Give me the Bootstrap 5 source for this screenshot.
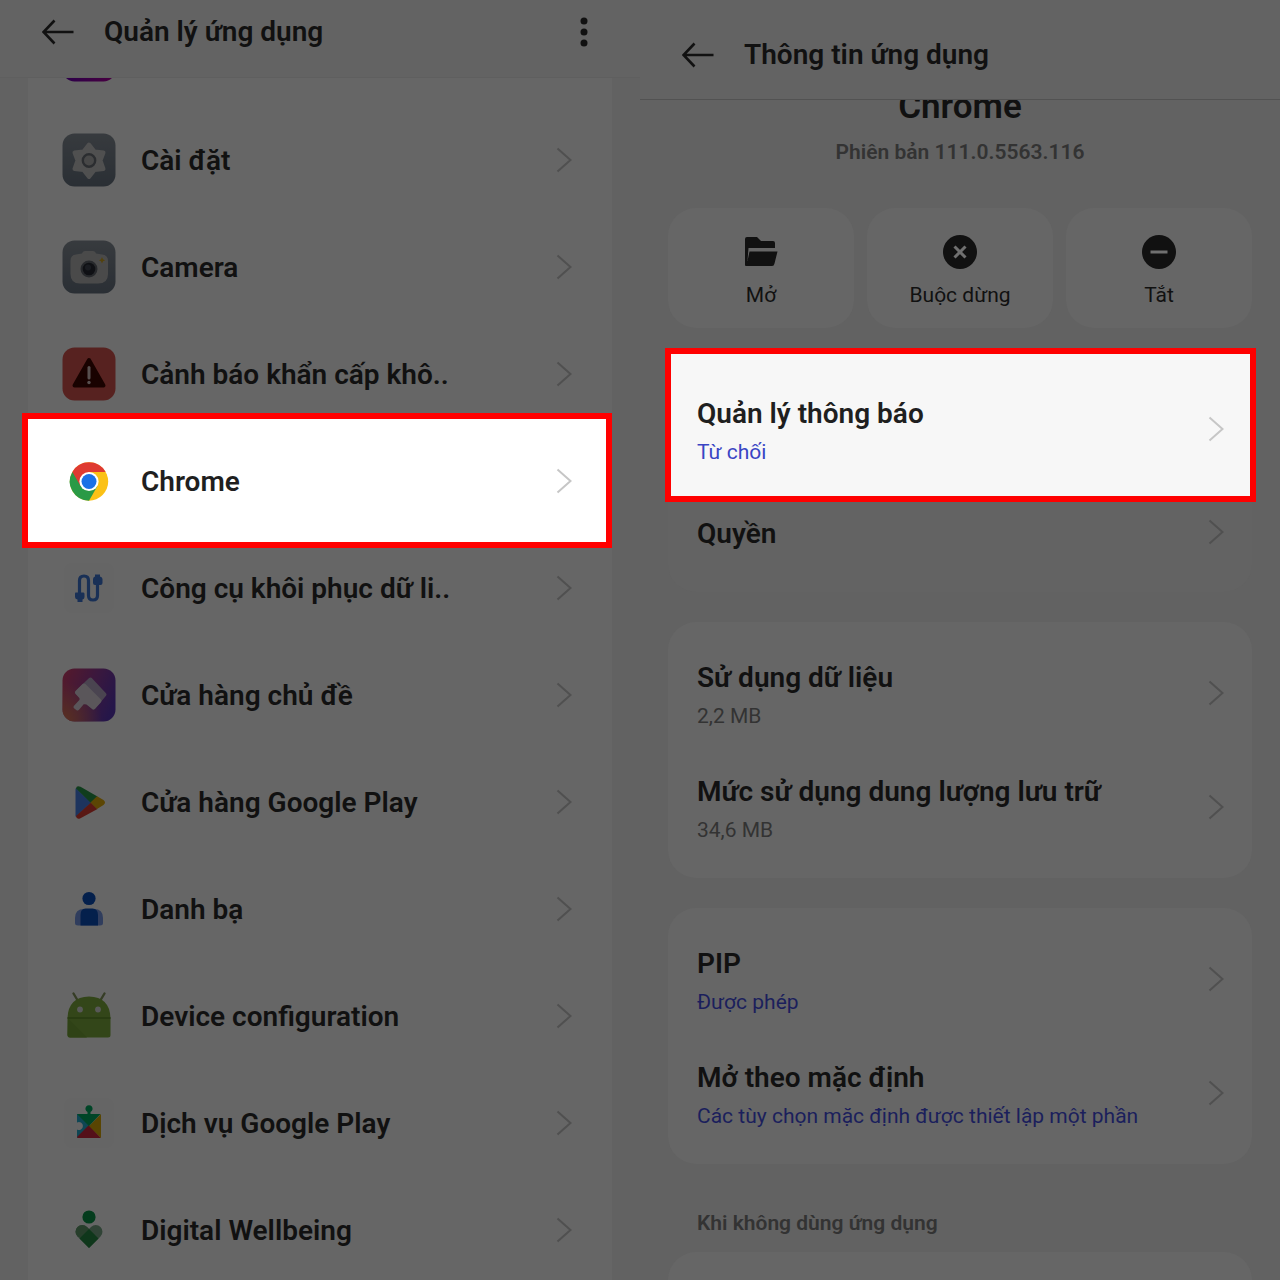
<!DOCTYPE html>
<html lang="vi">
<head>
<meta charset="utf-8">
<meta name="viewport" content="width=device-width, initial-scale=1">
<title>Quản lý ứng dụng</title>
<link rel="stylesheet" href="https://cdn.jsdelivr.net/npm/bootstrap@5.3.0/dist/css/bootstrap.min.css">
<style>
  body { font-family: Roboto, "Noto Sans", sans-serif; background: #626262; color: #111; }
  .screen { background: #626262; }
  .topbar { background: #636363; padding: 0 48px 0 42px; gap: 30px; z-index: 2; }
  .topbar-apps { height: 78px; padding-bottom: 14px; border-bottom: 1px solid #5f5f5f; }
  .topbar-info { height: 100px; padding-top: 10px; border-bottom: 1px solid #525252; }
  .plain-btn { background: none; border: 0; padding: 0; color: inherit; line-height: 0; }
  .title { font-size: 28px; font-weight: 600; line-height: 36px; margin: 0; }
  .sheet { background: #666; margin: 0 28px; }
  .cut-row { height: 28px; padding-left: 34px; overflow: hidden; }
  .cut-row svg { margin-top: -50px; }
  .app-row { height: 107px; padding: 0 40px 0 34px; gap: 25px; color: #111; text-decoration: none; position: relative; }
  .app-row > * { position: relative; }
  .app-row .title { padding-top: 2px; }
  .app-icon { width: 54px; height: 54px; flex: none; filter: brightness(.4); }
  .chev { width: 16px; height: 26px; flex: none; fill: none; stroke: #505050; stroke-width: 2; margin-left: auto; }
  .picked { color: #1f1f1f; z-index: 1; }
  .picked::before { content: ""; position: absolute; border: 6px solid #f00; }
  .app-row.picked { color: #1f1f1f; }
  .app-row.picked::before { inset: -14px 0 -14px -6px; background: #fff; }
  .picked .app-icon { filter: none; }
  .picked .chev { stroke: #c6c6c6; }
  .info-body { padding: 0 28px; gap: 30px; }
  .app-name { font-size: 35px; font-weight: 600; line-height: 42px; margin: -14px 0 0; }
  .version { font-size: 21px; font-weight: 600; line-height: 28px; color: #333; margin: 10px 0 0; }
  .tiles { gap: 13px; margin-top: 12px; }
  .tile { background: #666; border: 0; border-radius: 28px; height: 120px; flex: 1 1 0; color: #111; font-size: 21px; line-height: 28px; padding-top: 8px; gap: 11px; }
  .tile svg { width: 36px; height: 36px; }
  .panel { background: #666; border-radius: 28px; padding: 14px 0; }
  .panel-faint { background: #636363; }
  .panel-last { border-radius: 28px 28px 0 0; margin-top: -15px; }
  .set-row { height: 114px; padding: 0 28px 0 29px; color: #111; text-decoration: none; position: relative; }
  .set-row > * { position: relative; }
  .set-row > span { padding-top: 4px; }
  .set-row-single { height: 92px; }
  .set-row.picked { color: #1f1f1f; }
  .set-row.picked::before { inset: -24px -4px -16px -3px; background: #f7f7f7; }
  .note { font-size: 21px; line-height: 28px; color: #333; margin-top: 6px; }
  .note-link { color: #1b1f5c; }
  .picked .note-link { color: #3a45c4; }
  .group-label { font-size: 21px; font-weight: 600; line-height: 28px; color: #333; margin: 15px 0 0 29px; }
</style>
<script src="https://cdn.jsdelivr.net/npm/bootstrap@5.3.0/dist/js/bootstrap.bundle.min.js"></script>
</head>
<body>
<svg width="0" height="0" class="position-absolute" aria-hidden="true">
  <defs>
    <linearGradient id="slate" x1="0" y1="0" x2="0" y2="1"><stop offset="0" stop-color="#8a929b"/><stop offset="1" stop-color="#697583"/></linearGradient>
    <linearGradient id="violet"><stop offset="0" stop-color="#6a00b8"/><stop offset="1" stop-color="#b800a0"/></linearGradient>
    <linearGradient id="theme" x1="0" y1=".2" x2="1" y2=".6"><stop offset="0" stop-color="#d04070"/><stop offset=".5" stop-color="#963c98"/><stop offset="1" stop-color="#5c38b8"/></linearGradient>
    <radialGradient id="glow" cx="0" cy="1" r=".75"><stop offset="0" stop-color="#e07c50"/><stop offset="1" stop-color="#e07c50" stop-opacity="0"/></radialGradient>
    <symbol id="chevron" viewBox="0 0 16 26"><path d="M1.500 1.500L14.500 13L1.500 24.500"/></symbol>
    <symbol id="back" viewBox="0 0 32 26"><path d="M12.500 1.500L1.500 13L12.500 24.500M1.500 13H31.500" fill="none" stroke="#111" stroke-width="2.600"/></symbol>
  </defs>
</svg>
<main class="row g-0 vh-100 overflow-hidden">
  <section class="screen col-6">
    <header class="topbar topbar-apps d-flex align-items-center position-relative">
      <button class="plain-btn" type="button" aria-label="Quay lại"><svg width="32" height="26"><use href="#back"/></svg></button>
      <h1 class="title">Quản lý ứng dụng</h1>
      <button class="plain-btn ms-auto" type="button" aria-label="Thêm"><svg width="16" height="30" fill="#111"><circle cx="8" cy="4" r="3.500"/><circle cx="8" cy="15" r="3.500"/><circle cx="8" cy="26" r="3.500"/></svg></button>
    </header>
    <nav class="sheet" aria-label="Ứng dụng">
      <div class="cut-row"><svg class="app-icon d-block" viewBox="0 0 54 54"><rect x=".5" y=".5" width="53" height="53" rx="12" fill="url(#violet)"/></svg></div>
      <a href="#" class="app-row d-flex align-items-center">
        <svg class="app-icon" viewBox="0 0 54 54"><rect x=".5" y=".5" width="53" height="53" rx="12" fill="url(#slate)"/><path d="M27 11.500L32.500 18.500L41.500 19.500L38.500 27.500L41.500 36L32.500 37L27 44L21.500 37L12.500 36L15.500 27.500L12.500 19.500L21.500 18.500Z" fill="#c8c8c8" stroke="#c8c8c8" stroke-width="4" stroke-linejoin="round"/><circle cx="27" cy="27.500" r="6.200" fill="#b4b4b4" stroke="#6c7178" stroke-width="2.400"/></svg>
        <span class="title">Cài đặt</span><svg class="chev"><use href="#chevron"/></svg></a>
      <a href="#" class="app-row d-flex align-items-center">
        <svg class="app-icon" viewBox="0 0 54 54"><rect x=".5" y=".5" width="53" height="53" rx="12" fill="url(#slate)"/><path d="M20 13.500Q20.500 11 23 11H31Q33.500 11 34 13.500L40 14.500Q46 15 46 21V34Q46 43.500 36 43.500H18Q8.500 43.500 8.500 34V21Q8.500 15 14 14.500Z" fill="#bababa"/><circle cx="27" cy="29" r="8.500" fill="#62666d"/><circle cx="27" cy="29" r="6.300" fill="#252932"/><circle cx="26" cy="27.500" r="3" fill="#404652"/><path d="M40 17l1 2.200 2.200 1-2.200 1-1 2.200-1-2.200-2.200-1 2.200-1z" fill="#d0a520"/></svg>
        <span class="title">Camera</span><svg class="chev"><use href="#chevron"/></svg></a>
      <a href="#" class="app-row d-flex align-items-center">
        <svg class="app-icon" viewBox="0 0 54 54"><rect x=".5" y=".5" width="53" height="53" rx="12" fill="#d95650"/><path d="M27 13L41.500 38.500H12.500Z" fill="#3e0500" stroke="#3e0500" stroke-width="4" stroke-linejoin="round"/><path d="M27 20.500V31" stroke="#ddc8c5" stroke-width="3" stroke-linecap="round"/><circle cx="27" cy="35.500" r="1.700" fill="#ddc8c5"/></svg>
        <span class="title">Cảnh báo khẩn cấp khô..</span><svg class="chev"><use href="#chevron"/></svg></a>
      <a href="#" class="app-row picked d-flex align-items-center">
        <svg class="app-icon" viewBox="0 0 54 54"><circle cx="27" cy="27.500" r="19.200" fill="#fbc116"/><path d="M27 27.500L10.370 17.900A19.200 19.200 0 0 0 27 46.700L35.310 32.300Z" fill="#2a9a46"/><path d="M10.370 17.900A19.200 19.200 0 0 1 43.630 17.900H27L18.690 32.300Z" fill="#df3a31"/><circle cx="27" cy="27.500" r="9.600" fill="#fff"/><circle cx="27" cy="27.500" r="7.500" fill="#1b70e6"/></svg>
        <span class="title">Chrome</span><svg class="chev"><use href="#chevron"/></svg></a>
      <a href="#" class="app-row d-flex align-items-center">
        <svg class="app-icon" viewBox="0 0 54 54"><rect x="2" y="2" width="50" height="50" rx="8" fill="#fcfcfc"/><path d="M17.500 34V19.500Q17.500 15 22 15Q26.500 15 26.500 19.500V34.500Q26.500 39 31 39Q35.500 39 35.500 34.500V22" fill="none" stroke="#3f78d8" stroke-width="3.200"/><path d="M13.500 31.500H21.500Q22.500 31.500 22.500 33V36Q22.500 38 20.500 38.500V41H15.500V38.500Q13 38 13 36V33Q13 31.500 13.500 31.500Z" fill="#3f78d8"/><path d="M33 13.500H38V15.500Q40.500 16 40.500 18V22Q40.500 24 38.500 24H33Q31 24 31 22V18Q31 16 33 15.500Z" fill="#3f78d8"/></svg>
        <span class="title">Công cụ khôi phục dữ li..</span><svg class="chev"><use href="#chevron"/></svg></a>
      <a href="#" class="app-row d-flex align-items-center">
        <svg class="app-icon" viewBox="0 0 54 54"><rect x=".5" y=".5" width="53" height="53" rx="12" fill="url(#theme)"/><rect x=".5" y=".5" width="53" height="53" rx="12" fill="url(#glow)"/><path d="M28.500 11.500L42.500 26.500L31.500 39.500L15 24.500Z" fill="#b9aac8" stroke="#b9aac8" stroke-width="4" stroke-linejoin="round"/><path d="M22 17.500L37.500 33L31.500 39.500L25 34.500L21 34L15.500 40.500L13.500 39L19.500 32.500V29.500L15 24.500Z" fill="#e0d8e0" stroke="#e0d8e0" stroke-width="4" stroke-linejoin="round"/></svg>
        <span class="title">Cửa hàng chủ đề</span><svg class="chev"><use href="#chevron"/></svg></a>
      <a href="#" class="app-row d-flex align-items-center">
        <svg class="app-icon" viewBox="0 0 54 54"><path d="M14 13.500V41.500L28.500 27.500Z" fill="#4883ea" stroke="#4883ea" stroke-width="1"/><path d="M14 13.500Q14.500 10 18.500 11.800L35.500 21.500L29 28L14 13.500Z" fill="#299948"/><path d="M14 41Q14.500 45 18.500 43.200L35.500 34L29 27.500Z" fill="#df3d33"/><path d="M35 21.300L41.500 25Q44.500 27.500 41.500 30L35 34L28.500 27.500Z" fill="#e5af0b"/></svg>
        <span class="title">Cửa hàng Google Play</span><svg class="chev"><use href="#chevron"/></svg></a>
      <a href="#" class="app-row d-flex align-items-center">
        <svg class="app-icon" viewBox="0 0 54 54"><path d="M22 27H32Q41 27 41 36V41Q41 43.500 38 43.500H16Q13 43.500 13 41V36Q13 27 22 27Z" fill="#7799e8"/><path d="M23.500 26.500H30.500Q36 26.500 36 33V43.500H18.500V33Q18.500 26.500 23.500 26.500Z" fill="#0b50bd"/><circle cx="27" cy="16.500" r="6.600" fill="#0b50bd"/></svg>
        <span class="title">Danh bạ</span><svg class="chev"><use href="#chevron"/></svg></a>
      <a href="#" class="app-row d-flex align-items-center">
        <svg class="app-icon" viewBox="0 0 54 54"><path d="M11.500 4.500L16 12M42.500 4.500L38 12" stroke="#86985e" stroke-width="2.400" stroke-linecap="round"/><path d="M5.500 29.500Q6 8 27 7.500Q48 8 48.500 29.500V46Q48.500 48.500 46 48.500H8Q5.500 48.500 5.500 46Z" fill="#7fae3e"/><path d="M5.500 29H48.500" stroke="#5f8e2a" stroke-width="1.500"/><path d="M6 29.500L25 48.500H8Q5.500 48.500 5.500 46Z" fill="#75a437"/><circle cx="18" cy="20.500" r="2.900" fill="#ddd"/><circle cx="36" cy="20.500" r="2.900" fill="#ddd"/></svg>
        <span class="title">Device configuration</span><svg class="chev"><use href="#chevron"/></svg></a>
      <a href="#" class="app-row d-flex align-items-center">
        <svg class="app-icon" viewBox="0 0 54 54"><rect x="2" y="2" width="50" height="50" rx="8" fill="#fcfcfc"/><path d="M15 18H27V30L15 42V33.500A4 4 0 1 0 15 26.500Z" fill="#22aed2"/><path d="M15 41L27 29L39 42H16Q15 42 15 41Z" fill="#d3283f"/><path d="M39 18V42L27 30Z" fill="#dfac05"/><path d="M15 18H25.500V16A3.600 3.600 0 1 1 28.500 16V18H38.500L27 30Z" fill="#00ad62"/></svg>
        <span class="title">Dịch vụ Google Play</span><svg class="chev"><use href="#chevron"/></svg></a>
      <a href="#" class="app-row d-flex align-items-center">
        <svg class="app-icon" viewBox="0 0 54 54"><path d="M27 45L15.500 33.500A6.700 6.700 0 0 1 25 24L27 26L29 24A6.700 6.700 0 0 1 38.500 33.500Z" fill="#79a787"/><path d="M15.500 33.500A6.700 6.700 0 0 1 25 24L33 32L27 38.500Z" fill="#619c6c"/><path d="M27 26L36.500 35.500L27 45L17.500 35.500Z" fill="#268a43"/><circle cx="27" cy="14" r="6.600" fill="#0a9648"/></svg>
        <span class="title">Digital Wellbeing</span><svg class="chev"><use href="#chevron"/></svg></a>
    </nav>
  </section>

  <section class="screen col-6 d-flex flex-column">
    <header class="topbar topbar-info d-flex align-items-center position-relative flex-shrink-0">
      <button class="plain-btn" type="button" aria-label="Quay lại"><svg width="32" height="26"><use href="#back"/></svg></button>
      <h1 class="title">Thông tin ứng dụng</h1>
    </header>
    <div class="info-body d-flex flex-column flex-grow-1">
      <div class="text-center">
        <h2 class="app-name">Chrome</h2>
        <p class="version">Phiên bản 111.0.5563.116</p>
      </div>
      <div class="tiles d-flex">
        <button type="button" class="tile d-flex flex-column align-items-center justify-content-center">
          <svg viewBox="0 0 36 36"><path d="M2 31V5Q2 3 4 3H14L18 7H30Q32 7 32 9V14H5.500L4.500 27L6.500 17.500H34.500L31.500 29.500Q31 32 29 32H3Q2 32 2 31Z" fill="#111"/></svg><span>Mở</span></button>
        <button type="button" class="tile d-flex flex-column align-items-center justify-content-center">
          <svg viewBox="0 0 36 36"><circle cx="18" cy="18" r="17" fill="#111"/><path d="M12.500 12.500L23.500 23.500M23.500 12.500L12.500 23.500" stroke="#707070" stroke-width="3"/></svg><span>Buộc dừng</span></button>
        <button type="button" class="tile d-flex flex-column align-items-center justify-content-center">
          <svg viewBox="0 0 36 36"><circle cx="18" cy="18" r="17" fill="#111"/><path d="M9.500 18H26.500" stroke="#707070" stroke-width="3"/></svg><span>Tắt</span></button>
      </div>
      <div class="panel panel-faint">
        <a href="#" class="set-row picked d-flex align-items-center"><span><span class="title d-block">Quản lý thông báo</span><span class="note note-link d-block">Từ chối</span></span><svg class="chev"><use href="#chevron"/></svg></a>
        <a href="#" class="set-row set-row-single d-flex align-items-center"><span class="title">Quyền</span><svg class="chev"><use href="#chevron"/></svg></a>
      </div>
      <div class="panel">
        <a href="#" class="set-row d-flex align-items-center"><span><span class="title d-block">Sử dụng dữ liệu</span><span class="note d-block">2,2 MB</span></span><svg class="chev"><use href="#chevron"/></svg></a>
        <a href="#" class="set-row d-flex align-items-center"><span><span class="title d-block">Mức sử dụng dung lượng lưu trữ</span><span class="note d-block">34,6 MB</span></span><svg class="chev"><use href="#chevron"/></svg></a>
      </div>
      <div class="panel">
        <a href="#" class="set-row d-flex align-items-center"><span><span class="title d-block">PIP</span><span class="note note-link d-block">Được phép</span></span><svg class="chev"><use href="#chevron"/></svg></a>
        <a href="#" class="set-row d-flex align-items-center"><span><span class="title d-block">Mở theo mặc định</span><span class="note note-link d-block">Các tùy chọn mặc định được thiết lập một phần</span></span><svg class="chev"><use href="#chevron"/></svg></a>
      </div>
      <h2 class="group-label">Khi không dùng ứng dụng</h2>
      <div class="panel panel-last flex-grow-1"></div>
    </div>
  </section>
</main>
</body>
</html>
